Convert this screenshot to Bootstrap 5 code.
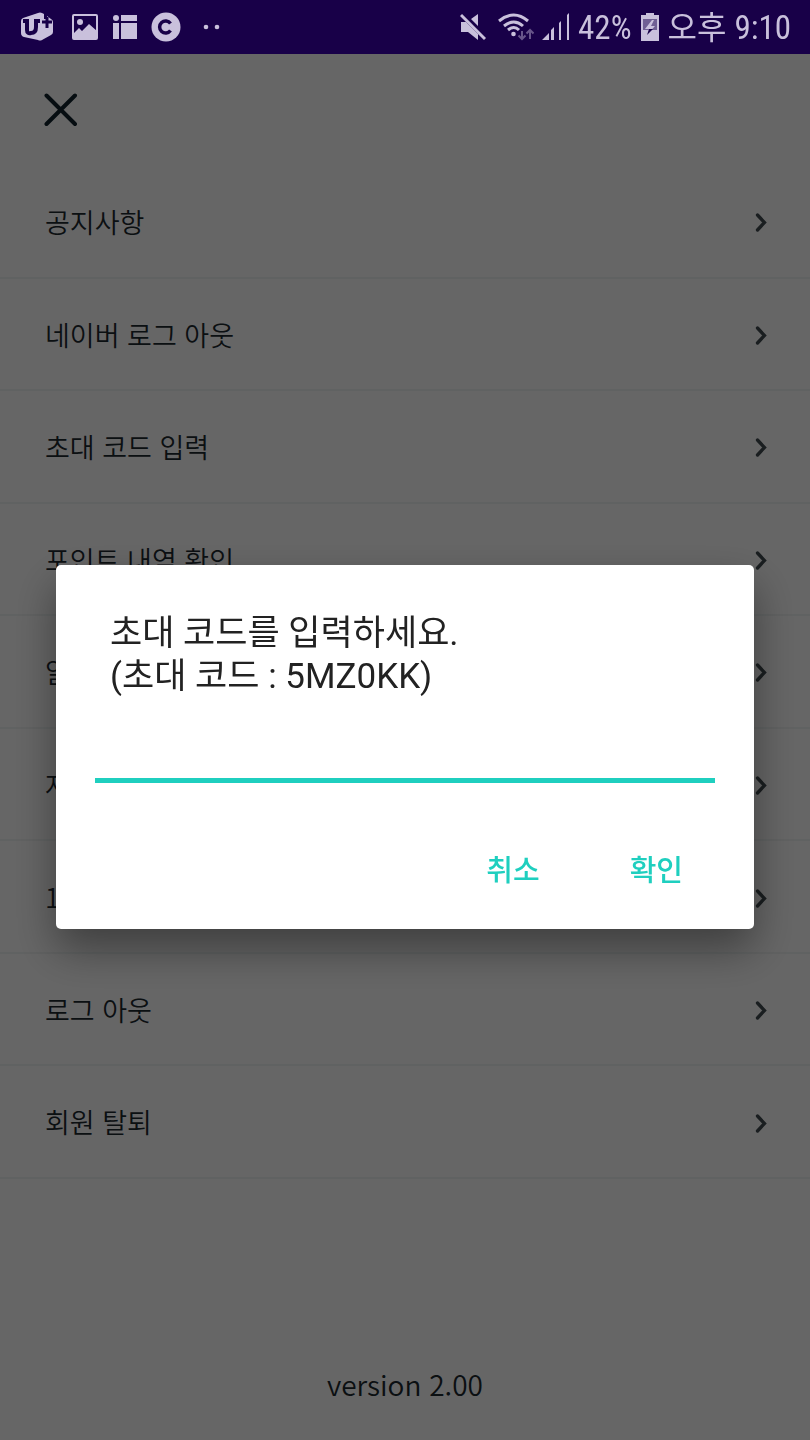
<!DOCTYPE html>
<html lang="ko">
<head>
<meta charset="utf-8">
<meta name="viewport" content="width=device-width, initial-scale=1">
<title>설정</title>
<link rel="stylesheet" href="https://cdn.jsdelivr.net/npm/bootstrap@5.3.0/dist/css/bootstrap.min.css">
<style>
  body { font-family: "Noto Sans CJK KR", sans-serif; color: #1c282f; background: #fff; }
  .status-bar { height: 54px; padding: 0 19px 0 20px; background: #180048; color: #c9c0dc; z-index: 1060;
    font: 33px/54px "Roboto Condensed", "Roboto", "Noto Sans CJK KR", sans-serif; }
  .status-bar span { padding-top: 2px; }
  .status-bar .korean { font-size: 32px; }
  .status-icons { gap: 13px; }
  .status-info { gap: 8px; }
  .page { padding-top: 54px; font-size: 27px; font-weight: 350; }
  .top-row { height: 112px; padding: 0 44px; }
  .close-btn { color: #0f222c; line-height: 0; }
  .menu { grid-auto-rows: 1fr; min-height: 1013px; }
  .menu a { padding: 2px 42px 0 45px; border-bottom: 2px solid #f1f5f5; color: inherit; }
  .version { padding-bottom: 36px; font-size: 28px; line-height: 40px; }
  .dim { --bs-backdrop-opacity: .6; }
  .prompt { padding-top: 54px; }
  .prompt .modal-dialog { max-width: none; margin: 0 56px; min-height: 100%; }
  .prompt .modal-content { border-radius: 5px; padding: 47px 39px 26px; box-shadow: 0 20px 44px rgba(0, 0, 0, .4); }
  .prompt-text { padding: 0 15px; margin-bottom: 42px; color: #222; font: 35px/43px "Roboto", "Noto Sans CJK KR", sans-serif; }
  .code-input { height: 43px; border-bottom: 5px solid #1fcfbf; font-size: 32px; }
  .code-input:focus { box-shadow: none; border-color: #1fcfbf; }
  .actions { padding: 50px 7px 0 0; gap: 40px; }
  .action-btn { --bs-btn-color: #1fcfbf; --bs-btn-hover-color: #14a799; --bs-btn-padding-x: 25px; --bs-btn-padding-y: 0;
    --bs-btn-font-size: 29px; --bs-btn-font-weight: 500; --bs-btn-line-height: 72px; line-height: 70px; }
</style>
</head>
<body>
<header class="status-bar fixed-top d-flex align-items-center justify-content-between">
  <div class="status-icons d-flex align-items-center">
    <svg width="34" height="30" viewBox="0 0 34 30" aria-hidden="true">
      <path d="M1 9Q1 7 3 6L18 1Q20 0 22 1L24 2V7H27V4L31 7Q33 8 33 10V20Q33 22 31 23L22 28Q20 29 18 28L4 25Q1 24 1 21Z" fill="#c9c0dc"/>
      <path d="M3 9H7V18Q7 22 11 21Q16 21 16 15V9H20" fill="none" stroke="#180048" stroke-width="4"/>
      <path d="M27 5V16M22 10H32" fill="none" stroke="#180048" stroke-width="3"/>
    </svg>
    <svg class="ms-1" width="28" height="28" viewBox="0 0 28 28" aria-hidden="true">
      <rect x="2" y="2" width="24" height="24" rx="1" fill="none" stroke="#c9c0dc" stroke-width="2"/>
      <circle cx="9" cy="9" r="3" fill="#c9c0dc"/><path d="M3 20 8 15 11 18 18 11 26 18V26H3Z" fill="#c9c0dc"/>
    </svg>
    <svg width="26" height="26" viewBox="0 0 26 26" fill="#c9c0dc" aria-hidden="true">
      <circle cx="4" cy="4" r="3"/><path d="M9 1H25V7H9ZM1 9H7V25H1ZM9 9H25V25H9Z"/>
    </svg>
    <svg width="30" height="30" viewBox="0 0 30 30" aria-hidden="true">
      <circle cx="15" cy="15" r="14.500" fill="#c9c0dc"/><path d="M19.500 11.500A6 6 0 1 0 19.500 18.500" fill="none" stroke="#180048" stroke-width="3.500"/>
    </svg>
    <svg class="ms-2" width="20" height="6" viewBox="0 0 20 6" fill="#c9c0dc" aria-hidden="true"><circle cx="4" cy="3" r="2.300"/><circle cx="15" cy="3" r="2.300"/></svg>
  </div>
  <div class="status-info d-flex align-items-center">
    <svg width="26" height="28" viewBox="0 0 26 28" aria-hidden="true">
      <path d="M1 9H6L18 21V27L8 19H1ZM11 6 18 1V13Z" fill="#c9c0dc"/><path d="M1 2 25 26" stroke="#c9c0dc" stroke-width="3"/>
    </svg>
    <svg class="ms-1" width="36" height="28" viewBox="0 0 36 28" fill="none" stroke="#c9c0dc" aria-hidden="true">
      <path d="M1 8Q16 -4 30 8M6 13Q16 5 25 13M10 17Q16 12 21 17" stroke-width="3"/><circle cx="15.500" cy="21" r="2.300" fill="#c9c0dc" stroke="none"/>
      <path d="M24 18V26M20.500 22.500 24 26 27.500 22.500M32 26V17M28.500 20.500 32 17 35.500 20.500" stroke="#67558a" stroke-width="2"/>
    </svg>
    <svg width="28" height="28" viewBox="0 0 28 28" fill="#c9c0dc" aria-hidden="true">
      <path d="M0 27 7 20V27ZM9 17 12 14V27H9ZM17 10 19 8V27H17ZM25 2 27 0V27H25Z"/>
    </svg>
    <span>42%</span>
    <svg width="20" height="30" viewBox="0 0 20 30" aria-hidden="true">
      <path d="M6 1H14V3H19V29H1V3H6Z" fill="#c9c0dc"/><path d="M3 7H17V18H3Z" fill="#705f94"/>
      <path d="M12 8 5 17H9L7 23 15 14H11L14 8Z" fill="#c9c0dc"/><path d="M9 17 7 23 13 17Z" fill="#180048"/>
    </svg>
    <span class="korean">오후</span>
    <span>9:10</span>
  </div>
</header>

<main class="page d-flex flex-column min-vh-100">
  <div class="top-row d-flex align-items-center">
    <button type="button" class="close-btn btn p-0 border-0" aria-label="닫기">
      <svg width="34" height="34" viewBox="0 0 34 34"><path d="M2.500 2.500 31 31M31 2.500 2.500 31" stroke="currentColor" stroke-width="4" stroke-linecap="round"/></svg>
    </button>
  </div>
  <nav class="menu d-grid" aria-label="설정 메뉴">
    <a href="#" class="d-flex align-items-center justify-content-between text-decoration-none">공지사항<svg width="14" height="20" viewBox="0 0 14 20"><use href="#chevron"/></svg></a>
    <a href="#" class="d-flex align-items-center justify-content-between text-decoration-none">네이버 로그 아웃<svg width="14" height="20" viewBox="0 0 14 20"><use href="#chevron"/></svg></a>
    <a href="#" class="d-flex align-items-center justify-content-between text-decoration-none">초대 코드 입력<svg width="14" height="20" viewBox="0 0 14 20"><use href="#chevron"/></svg></a>
    <a href="#" class="d-flex align-items-center justify-content-between text-decoration-none">포인트 내역 확인<svg width="14" height="20" viewBox="0 0 14 20"><use href="#chevron"/></svg></a>
    <a href="#" class="d-flex align-items-center justify-content-between text-decoration-none">알림<svg width="14" height="20" viewBox="0 0 14 20"><use href="#chevron"/></svg></a>
    <a href="#" class="d-flex align-items-center justify-content-between text-decoration-none">자주 묻는 질문<svg width="14" height="20" viewBox="0 0 14 20"><use href="#chevron"/></svg></a>
    <a href="#" class="d-flex align-items-center justify-content-between text-decoration-none">1:1 문의<svg width="14" height="20" viewBox="0 0 14 20"><use href="#chevron"/></svg></a>
    <a href="#" class="d-flex align-items-center justify-content-between text-decoration-none">로그 아웃<svg width="14" height="20" viewBox="0 0 14 20"><use href="#chevron"/></svg></a>
    <a href="#" class="d-flex align-items-center justify-content-between text-decoration-none">회원 탈퇴<svg width="14" height="20" viewBox="0 0 14 20"><use href="#chevron"/></svg></a>
  </nav>
  <p class="version text-center mt-auto mb-0">version 2.00</p>
</main>

<svg class="d-none" aria-hidden="true"><defs><path id="chevron" d="M3.500 3 10.500 10.500 3.500 18" fill="none" stroke="#414b50" stroke-width="3.300" stroke-linecap="round"/></defs></svg>

<div class="dim modal-backdrop show"></div>
<div class="prompt modal d-block" role="dialog" aria-modal="true" aria-labelledby="promptText">
  <div class="modal-dialog modal-dialog-centered">
    <form class="modal-content border-0">
      <label id="promptText" class="prompt-text" for="inviteCode">초대 코드를 입력하세요.<br>(초대 코드 : 5MZ0KK)</label>
      <input id="inviteCode" type="text" class="code-input form-control border-top-0 border-start-0 border-end-0 rounded-0 p-0" autocomplete="off">
      <div class="actions d-flex justify-content-end">
        <button type="button" class="action-btn btn border-0">취소</button>
        <button type="submit" class="action-btn btn border-0">확인</button>
      </div>
    </form>
  </div>
</div>
<script src="https://cdn.jsdelivr.net/npm/bootstrap@5.3.0/dist/js/bootstrap.bundle.min.js"></script>
</body>
</html>
